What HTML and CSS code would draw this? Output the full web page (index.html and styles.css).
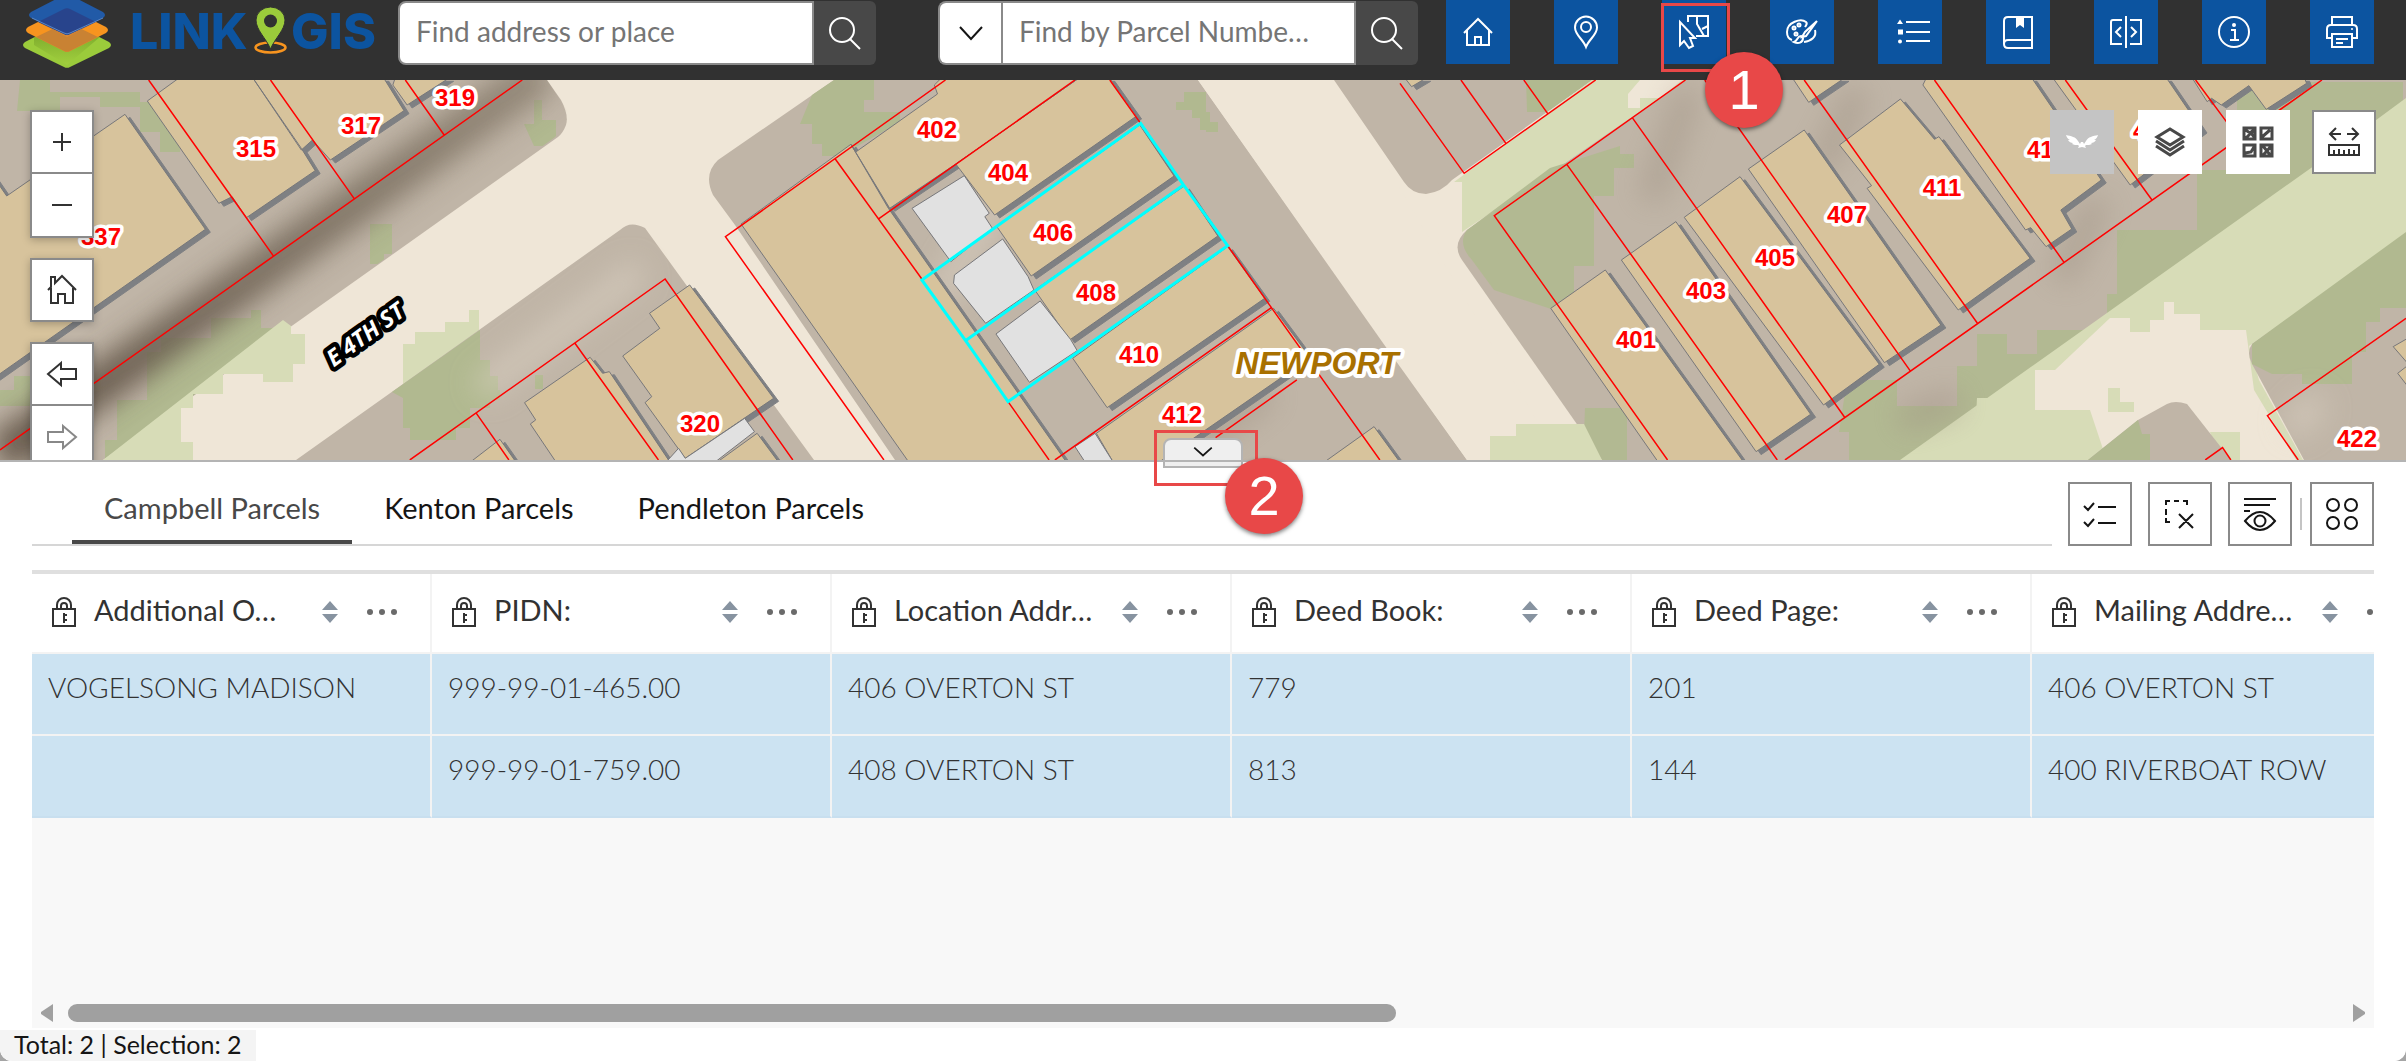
FILE: index.html
```html
<!DOCTYPE html>
<html lang="en">
<head>
<meta charset="utf-8">
<title>LINK GIS</title>
<link rel="stylesheet" href="styles.css">
</head>
<body>
<header class="topbar">
  <a class="logo" href="#" aria-label="LINK GIS">
    <svg width="384" height="72" viewBox="0 0 384 72">
      <defs>
        <linearGradient id="g1" x1="0" x2="0" y1="0" y2="1"><stop offset="0" stop-color="#4a7018"/><stop offset=".5" stop-color="#7ba82b"/><stop offset="1" stop-color="#a5d240"/></linearGradient>
        <linearGradient id="g2" x1="0" x2="0" y1="0" y2="1"><stop offset="0" stop-color="#a85a1c"/><stop offset="1" stop-color="#d98a38"/></linearGradient>
      </defs>
      <path d="M25 42 64 22a6 6 0 0 1 6 0l39 20q4 3 0 6L70 67a6 6 0 0 1-6 0L25 48q-4-3 0-6z" fill="#9bcb3b"/>
      <path d="M34 37 67 20l33 17 -33 28 -33-20z" fill="url(#g1)" opacity=".6"/>
      <path d="M28 27 64 9a6 6 0 0 1 6 0l36 18q4 3 0 6L70 51a6 6 0 0 1-6 0L28 33q-4-3 0-6z" fill="#f7941f"/>
      <path d="M36 37 67 22l31 15 -28 14a6 6 0 0 1-6 0z" fill="#c98233"/>
      <path d="M40 23 67 9l27 14 -27 14z" fill="url(#g2)"/>
      <path d="M31 12 64-5a6 6 0 0 1 6 0l33 17q4 3 0 6L70 34a6 6 0 0 1-6 0L31 18q-4-3 0-6z" fill="#215aa7"/>
      <path d="M38 22 64 9a6 6 0 0 1 6 0l26 13-26 12a6 6 0 0 1-6 0z" fill="#28448c"/>
      <path d="M32 18 64 33a6 6 0 0 0 6 0l33-15" fill="none" stroke="#5a86c4" stroke-width="1"/>
      <text x="130" y="49" class="logo-word">LINK</text>
      <ellipse cx="270.500" cy="47.500" rx="15" ry="5" fill="none" stroke="#f7941f" stroke-width="2.500"/>
      <path d="M270.500 49C266 38 256 30 256 20a14.500 13 0 0 1 29 0c0 10-10 18-14.500 29z" fill="#9bcb3b" stroke="#313131" stroke-width="1"/>
      <circle cx="270.500" cy="21" r="6.500" fill="#313131"/>
      <text x="291" y="49" class="logo-word">GIS</text>
    </svg>
  </a>
  <form class="search">
    <input class="search-input first" type="text" aria-label="Find address or place" placeholder="Find address or place">
    <button class="search-go" type="button" aria-label="Search address"><svg class="ic" viewBox="0 0 32 32"><circle cx="13" cy="13" r="12"/><path d="m21 22 10 10"/></svg></button>
  </form>
  <form class="search">
    <button class="search-source" type="button" aria-label="Search source"><svg class="ic" viewBox="0 0 32 32"><path d="m5 10 11 12 11-12"/></svg></button>
    <input class="search-input" type="text" aria-label="Find by Parcel Number" placeholder="Find by Parcel Numbe…">
    <button class="search-go" type="button" aria-label="Search parcels"><svg class="ic" viewBox="0 0 32 32"><circle cx="13" cy="13" r="12"/><path d="m21 22 10 10"/></svg></button>
  </form>
  <nav class="tools">
    <button class="tool" type="button" aria-label="Home"><svg class="ic" viewBox="0 0 32 32"><path d="M2 17 16 3l14 14M5 14v15h22V14M13 29v-8h6v8"/></svg></button>
    <button class="tool" type="button" aria-label="Locate"><svg class="ic" viewBox="0 0 32 32"><path d="M16 31C13 23 5 19 5 11.500a11 11 0 0 1 22 0C27 19 19 23 16 31z"/><circle cx="16" cy="11" r="5"/></svg></button>
    <button class="tool" type="button" aria-label="Select parcels"><svg class="ic" viewBox="0 0 32 32"><path d="M2 7v23l4-4 5 7 4-2-3-8h5zM10 7V1h20v20h-12M19 1v8l7 12M30 11l-6 3" transform="translate(0 -1)"/></svg></button>
    <button class="tool" type="button" aria-label="Draw"><svg class="ic" viewBox="0 0 32 32"><path d="M19 11c1-2 3-3 1-5C15 2 1 6 1 16c0 4 2 7 5 8M18 26c7-1 13-5 11-12M31 5 19 16l-3 5 4-1 11-15M15 20c-4 0-3 5-7 6 4 2 9 1 9-4z"/><circle cx="13" cy="9" r="1.500"/><circle cx="8" cy="12" r="1.500"/><circle cx="10" cy="18" r="1.500"/></svg></button>
    <button class="tool" type="button" aria-label="Legend"><svg class="ic wide" viewBox="0 0 44 32"><path d="M18 6h24M18 16h24M18 25h24"/><path class="solid" d="M12 3.500 15 8H9zM10 13.500h5v5h-5z"/><circle class="solid" cx="12" cy="25.500" r="2"/></svg></button>
    <button class="tool" type="button" aria-label="Bookmarks"><svg class="ic" viewBox="0 0 32 32"><path d="M30 1H6Q2 1 2 5v23q0 4 4 4h24V1zM30 24H6q-4 0-4 4"/><path class="solid" d="M14 2h8v10l-4-3-4 3z"/></svg></button>
    <button class="tool" type="button" aria-label="Swipe"><svg class="ic" viewBox="0 0 32 32"><path d="M16 0v32M12 4H3q-2 0-2 2v22h11M20 4h11v24H20M11 11l-5 5 5 5M21 11l5 5-5 5"/></svg></button>
    <button class="tool" type="button" aria-label="About"><svg class="ic" viewBox="0 0 32 32"><circle cx="16" cy="16" r="15"/><path d="M13 14h4v10M12 24h9"/><circle class="solid" cx="16" cy="9" r="2"/></svg></button>
    <button class="tool" type="button" aria-label="Print"><svg class="ic" viewBox="0 0 32 32"><path d="M6 8V1h20v7M6 22H1V13q0-4 4-4h22q4 0 4 4v9h-5M6 18h20v13H6zM10 23h12M10 27h7"/><circle class="solid" cx="26" cy="13" r="1"/></svg></button>
  </nav>
  <div class="callout-box one"></div>
  <div class="callout-dot one">1</div>
</header>

<main class="map">
  <svg class="map-canvas" viewBox="0 80 2406 380" preserveAspectRatio="xMidYMid slice">
    <defs>
      <filter id="soft" x="-20%" y="-20%" width="140%" height="140%"><feGaussianBlur stdDeviation="14"/></filter>
      <clipPath id="block-nw"><path d="M0 80H547l20 30-2 20L103 460H0z"/></clipPath>
      <linearGradient id="fade" x1="0" x2="1" y1="0" y2="0"><stop offset="0" stop-color="#5b4e41"/><stop offset="1" stop-color="#8f8474"/></linearGradient>
    </defs>
    <rect class="road" y="80" width="2406" height="380"/>

    <!-- city blocks and vegetation, western half -->
    <path class="land" d="M0 80H547l14 20q8 15 5 25-3 8-8 12L103 460H0z"/>
    <g clip-path="url(#block-nw)">
      <path class="veg" d="M20 80h30v12h90v10h40v50h-20v-20h-20v-25h-40v-10h-40v14H17zM0 390h14v-14h16v30H0zM105 440h12v-40h30v-48h14v-14h50v-20h40v-8h10v18h20v20h12v30l-60 45-80 56H105zM370 224h22v30h-8v10h-14zM524 124h10v-24h8v20h14v16l-8 10h-14z"/>
      <path d="M545 70 0 456" fill="none" stroke="url(#fade)" stroke-width="42" filter="url(#soft)" opacity=".9"/>
    </g>
    <path class="vegl" d="M103 460h90v-18h-12v-34h12v-14h30v-20h40v8h30v-18h12v-30h-14v-8l-8-6zM403 400v-56h12v-12h30v-10h24v-12h10v60z"/>
    <path class="land" d="M296 460 620 230q10-10 25-2l42 58 127 174z"/>
    <path class="veg" d="M392 392 480 330v30h10v30h10v10h-10v8H470v20h-14v12H410v-12h-7v-30zM535 375h8v14h-8zM490 376h8v14h-8z"/>
    <path class="land" d="M834 80 718 160q-15 14-5 35l22 30 160 235h572L1198 80z"/>
    <path class="veg" d="M812 95 834 80h40v20h-10v12h36v10l-60 34h-18v-12h-10v-20h-12zM1184 92h22v20h4v18h-10v-12h-8v-8h-16v-8h8zM1206 122h12v10h-12z"/>
    <path class="road" d="M1198 80h138L1560 460h-93l-84-117z"/>

    <!-- city blocks and vegetation, eastern half -->
    <path class="land" d="M1334 80h258l-140 100q-10 12-26 14-14 0-22-12z"/>
    <path class="veg" d="M1526 80h66l-45 32h-20z"/>
    <path class="vegl" d="M1592 80h96L1462 232v-50h-8z"/>
    <path class="road" d="M1640 80h42l-22 18h-20v10h-12V94z"/>
    <path class="land" d="M1686 80 1467 230q-16 14-5 30l140 200h315L2406 100V80z"/>
    <path class="veg" d="M1550 168 1467 230q-10 14 5 30l22 30 60 20 20-10v-34h20v-70h20v-28h20v-14h-14v-8zM1585 408h42v52h-25l-18-25zM1847 380h50v26h60v-40h20v-32h30v20h30v-24h70v-36h10v-64h80v-60h40v-88h166v24L1917 460h-68v-28h-10z" opacity=".95"/>
    <path class="vegl" d="M1516 420v16h-26v24h112l-18-36h-68z"/>
    <path class="vegl" d="M2406 98v138L2249 346l10 34 44 80H1900L2311 168z"/>
    <path class="road" d="M2110 318h20v14h20v-12h14v-18h10v12h26v16h46l8 60 48 80H2110l-20-60h-55v-40h20z"/>
    <path class="vegl" d="M1977 398h12v14h40v14h36v34h-80v-10h-38v-14h28zM2108 388h12v14h14v10h-26zM2210 432h30v28h-20z"/>
    <path class="land" d="M2138 420 2088 460h143l-44-56q-12-4-20 0z"/>
    <path class="veg" d="M2138 420 2088 460h62v-26h-8z"/>
    <path class="land" d="M2406 236 2252 344q-6 8 0 20l52 96h102z"/>
    <path class="veg" d="M2406 232 2252 344v20l20 10h30v10h50v-32h14v-30h14v-14h26z"/>
    <path d="M1690 90 1650 200M1860 90 1820 170M2100 200 2060 280M1960 400l-60 20M1270 390l-80 60" fill="none" stroke="#9d9081" stroke-width="26" filter="url(#soft)" opacity=".45"/>
    <path d="M640 270 480 390M1000 200l-60 100M2320 400l-30 30" fill="none" stroke="#dcd2c4" stroke-width="24" filter="url(#soft)" opacity=".6"/>

    <!-- building footprints -->
    <g class="buildings">
      <g transform="translate(0 80) scale(.4464 .3333)">
        <path d="M-20 280 15 348 280 103 460 448-20 900zM330 63 400-5H567L675 205 706 272 552 413 520 350 490 370zM567-5H860L905 92 740 240 700 180 675 210zM885-5 880 15 912 75 1005-5zM1545 615 1733 955 1535 1135 1445 968 1460 950 1395 828 1478 745 1455 700zM1322 832 1350 880 1365 875 1500 1145H1245L1188 1032 1200 1020 1175 968zM1055 1145 1120 1078 1155 1145z"/>
      </g>
      <g transform="translate(700 80) scale(.4464 .3333)">
        <path d="M92 432 338 193 422 385 820 1145H467zM338 193 350 215 532 42 525 15 540-5H848L573 252 425 385zM573 252 848-5H918L978 108 660 405zM985 135 1062 288 742 588 665 440zM1085 318 1160 468 828 780 750 630zM1182 500 1265 655 912 983 835 835zM1285 685 1367 833 1030 1145H925L888 1060zM1510 1040 1400 1145H1567zM128 1060 40 1145H175z"/>
      </g>
      <g transform="translate(1400 80) scale(.6416 .3333)">
        <path d="M320 570 235 685 402 1145H535zM430 425 345 540 555 1115 640 1003zM530 290 443 412 660 975 747 853zM630 150 543 267 755 848 843 735zM780 57 685 195 735 317 728 325 870 690 982 535 840 170 833 178zM820-5 815 15 975 450 983 443 1007 500 1047 447 1030 390 1093 300 985-5zM1018-5 1138 315 1250 150 1195-5zM1235-5 1258 65 1265 55 1280 75 1323 17 1350 88 1413 10 1410-5zM612-5 637 67 692-5zM8-5 18 20 40-5zM1575 770 1548 800 1575 860zM1575 850 1555 880 1575 930z"/>
      </g>
    </g>
    <g class="decks" transform="translate(700 80) scale(.4464 .3333)">
      <path d="M592 287 475 385 562 545 655 445 638 410 648 400zM678 477 570 585 568 610 640 730 748 630 735 590zM762 663 663 762 738 907 845 812 830 778zM885 1060 925 1145H862L840 1100zM100 1015 122 1055 35 1145H-75L-48 1105-33 1135z"/>
    </g>

    <!-- parcel lines -->
    <g class="parcels">
      <path transform="translate(0 80) scale(.4464 .3333)" d="M333 0 612 527M606 0 793 355M908 0 995 165M1170 0 0 1110M918 1140 1490 597 1776 1140M1288 790 1475 1140M1066 998 1140 1140"/>
      <path transform="translate(700 80) scale(.4464 .3333)" d="M550 0 57 470 412 1140M303 237 497 597M840 0 400 417M918 0 987 130M690 965 782 1140M1182 497 1280 683 1523 1140M1280 683 795 1140M1337 900 1155 1073"/>
      <path transform="translate(1400 80) scale(.6416 .3333)" d="M0 10 100 280 305 0M95 0 165 190M193 0 230 100M445 0 147 407 417 1140M260 253 588 1140M362 113 693 1012M475 0 795 872M630 0 900 730M833 0 1035 547M1037 0 1172 360M1240 0 1290 130M1437 0 600 1140M1568 715 1352 1007 1400 1140M1255 1140 1282 1103 1295 1140"/>
    </g>
    <path class="selected" transform="translate(700 80) scale(.4464 .3333)" d="M987 130 1083 315 595 782 497 600zM1083 315 1182 497 690 965 595 782z"/>

    <g class="labels">
      <text x="256" y="157">315</text><text x="361" y="134">317</text><text x="455" y="106">319</text><text x="101" y="245">337</text>
      <text x="700" y="432">320</text><text x="937" y="138">402</text><text x="1008" y="181">404</text><text x="1053" y="241">406</text>
      <text x="1096" y="301">408</text><text x="1139" y="363">410</text><text x="1182" y="423">412</text><text x="1636" y="348">401</text>
      <text x="1706" y="299">403</text><text x="1775" y="266">405</text><text x="1847" y="223">407</text><text x="1942" y="196">411</text>
      <text x="2047" y="158">413</text><text x="2153" y="139">415</text><text x="2357" y="447">422</text>
    </g>
    <text class="place" x="1317" y="374">NEWPORT</text>
    <text class="street" transform="translate(370 341) rotate(-36)">E 4TH ST</text>
  </svg>

  <div class="map-left">
    <div class="ctl-group">
      <button class="ctl" type="button" aria-label="Zoom in"><svg class="ic" viewBox="0 0 32 32"><path d="M16 7v18M7 16h18"/></svg></button>
      <button class="ctl" type="button" aria-label="Zoom out"><svg class="ic" viewBox="0 0 32 32"><path d="M6 16h20"/></svg></button>
    </div>
    <div class="ctl-group"><button class="ctl" type="button" aria-label="Default extent"><svg class="ic" viewBox="0 0 32 32"><path d="M2 16 5 13V3h4v6l7-7 14 14M5 14v15h7v-9h7v9h8V14"/></svg></button></div>
    <div class="ctl-group">
      <button class="ctl" type="button" aria-label="Previous extent"><svg class="ic" viewBox="0 0 32 32"><path d="M15 5 2 16l13 11v-6h15V11H15z"/></svg></button>
      <button class="ctl faded" type="button" aria-label="Next extent"><svg class="ic" viewBox="0 0 32 32"><path d="m17 5 13 11-13 11v-6H2V11h15z"/></svg></button>
    </div>
  </div>
  <div class="map-right">
    <button class="ctl off" type="button" aria-label="Eagle view"><svg class="ic" viewBox="0 0 32 32"><path class="solid" d="M0 9c5 1 10 2 12 6l2 3 1-2h2l1 2 2-3c2-4 7-5 12-6-1 3-2 4-4 5l2 0c-1 2-3 3-5 3l1 1c-2 1-4 1-6 1l-1 1 1 2-4-1-4 1 1-2-1-1c-2 0-4 0-6-1l1-1c-2 0-4-1-5-3h2c-2-1-3-2-4-5z"/></svg></button>
    <button class="ctl plain" type="button" aria-label="Layers"><svg class="ic bold" viewBox="0 0 32 32"><path d="M16 3 29 11 16 19 3 11zM2 15l14 9 14-9M2 20l14 9 14-9"/></svg></button>
    <button class="ctl plain" type="button" aria-label="Basemaps"><svg class="ic bold" viewBox="0 0 32 32"><path d="M2 2h11v11H2zM19 2h11v11H19zM2 19h11v11H2zM19 19h11v11H19zM2 3l6 4 5-4M4 12l5-5 4 5M20 11l8-7M3 27l6-1 3-5M21 20l4 5 4-5M21 29l4-4 4 5"/></svg></button>
    <button class="ctl last" type="button" aria-label="Measure"><svg class="ic" viewBox="0 0 32 32"><path d="M8 3 2 9l6 6M2 9h11M24 3l6 6-6 6M30 9H19M1 20h30v10H1zM6 30v-5M11 30v-6M16 30v-5M21 30v-6M26 30v-5" transform="translate(0 -1)"/></svg></button>
  </div>
</main>

<section class="panel">
  <button class="collapse" type="button" aria-label="Collapse table"><svg class="ic" viewBox="0 0 32 32"><path d="m6 11 10 9 10-9"/></svg></button>
  <div class="callout-box two"></div>
  <div class="callout-dot two">2</div>
  <div class="panel-head">
    <div class="tabs" role="tablist">
      <button class="tab active" type="button" role="tab">Campbell Parcels</button>
      <button class="tab" type="button" role="tab">Kenton Parcels</button>
      <button class="tab" type="button" role="tab">Pendleton Parcels</button>
    </div>
    <div class="actions">
      <button class="ctl" type="button" aria-label="Show selected"><svg class="ic" viewBox="0 0 32 32"><path d="m0 8 4 4 6-7M0 24l4 4 6-7M14 9h18M14 25h18"/></svg></button>
      <button class="ctl" type="button" aria-label="Clear selection"><svg class="ic" viewBox="0 0 32 32"><path d="M2 7V3h4M10 3h5M19 3h4v4M2 11v6M2 20v4h4M15 16l14 14M29 16 15 30"/></svg></button>
      <button class="ctl" type="button" aria-label="Show or hide columns"><svg class="ic" viewBox="0 0 32 32"><path d="M0 1h32M0 7h26M0 13h6M1 23q15-18 30 0-15 18-30 0z"/><circle cx="16" cy="23" r="5.500"/></svg></button>
      <span class="rule"></span>
      <button class="ctl" type="button" aria-label="Actions"><svg class="ic" viewBox="0 0 32 32"><circle cx="7" cy="7" r="6"/><circle cx="25" cy="7" r="6"/><circle cx="7" cy="25" r="6"/><circle cx="25" cy="25" r="6"/></svg></button>
    </div>
  </div>
  <svg width="0" height="0" class="defs">
    <symbol id="lock" viewBox="0 0 24 32"><path d="M1 13h22v17H1zM5 13V9a7 7 0 0 1 14 0v4M9 13v-3a3 3 0 0 1 6 0v3" fill="none" stroke="#323232" stroke-width="2"/><path d="M11 17h2v10h-2zM13 18h2v2h-2zM13 23h2v2h-2z" fill="#323232"/></symbol>
    <symbol id="sort" viewBox="0 0 16 22"><path d="M8 0l8 9H0zM8 22l8-9H0z" fill="#8793a0"/></symbol>
    <symbol id="more" viewBox="0 0 32 8"><circle cx="4" cy="4" r="3" fill="#6a6a6a"/><circle cx="16" cy="4" r="3" fill="#6a6a6a"/><circle cx="28" cy="4" r="3" fill="#6a6a6a"/></symbol>
  </svg>
  <div class="grid">
    <table class="data">
      <thead>
        <tr>
          <th scope="col"><div class="th"><svg class="lock"><use href="#lock"/></svg><span>Additional O…</span><svg class="sort"><use href="#sort"/></svg><svg class="more"><use href="#more"/></svg></div></th>
          <th scope="col"><div class="th"><svg class="lock"><use href="#lock"/></svg><span>PIDN:</span><svg class="sort"><use href="#sort"/></svg><svg class="more"><use href="#more"/></svg></div></th>
          <th scope="col"><div class="th"><svg class="lock"><use href="#lock"/></svg><span>Location Addr…</span><svg class="sort"><use href="#sort"/></svg><svg class="more"><use href="#more"/></svg></div></th>
          <th scope="col"><div class="th"><svg class="lock"><use href="#lock"/></svg><span>Deed Book:</span><svg class="sort"><use href="#sort"/></svg><svg class="more"><use href="#more"/></svg></div></th>
          <th scope="col"><div class="th"><svg class="lock"><use href="#lock"/></svg><span>Deed Page:</span><svg class="sort"><use href="#sort"/></svg><svg class="more"><use href="#more"/></svg></div></th>
          <th scope="col"><div class="th"><svg class="lock"><use href="#lock"/></svg><span>Mailing Addre…</span><svg class="sort"><use href="#sort"/></svg><svg class="more"><use href="#more"/></svg></div></th>
        </tr>
      </thead>
      <tbody>
        <tr><td>VOGELSONG MADISON</td><td>999-99-01-465.00</td><td>406 OVERTON ST</td><td>779</td><td>201</td><td>406 OVERTON ST</td></tr>
        <tr><td></td><td>999-99-01-759.00</td><td>408 OVERTON ST</td><td>813</td><td>144</td><td>400 RIVERBOAT ROW</td></tr>
      </tbody>
    </table>
    <div class="scrollbar">
      <svg width="14" height="18" viewBox="0 0 14 18"><path d="M13 0v18L1 10V8z" fill="#a0a0a0"/></svg>
      <div class="track"><div class="thumb"></div></div>
      <svg width="14" height="18" viewBox="0 0 14 18"><path d="M1 0v18l12-8V8z" fill="#a0a0a0"/></svg>
    </div>
  </div>
  <footer class="status">Total: 2 | Selection: 2</footer>
</section>
</body>
</html>
```
FILE: styles.css
```css
* { box-sizing: border-box; }
html { background: #a5a5a5; }
body {
  margin: 0;
  height: 100vh;
  display: flex;
  flex-direction: column;
  overflow: hidden;
  background: #fff;
  border-radius: 0 0 12px 12px;
  font-family: Lato, "Noto Sans", sans-serif;
  font-size: 28px;
  color: #323232;
}
button, input { font: inherit; color: inherit; margin: 0; padding: 0; border: 0; background: none; }
button { display: flex; align-items: center; justify-content: center; flex: none; }
.ic { width: 32px; height: 32px; fill: none; stroke: currentColor; stroke-width: 2; overflow: visible; }
.ic.wide { width: 44px; }
.ic.bold { stroke-width: 3; }
.solid { fill: currentColor; stroke: none; }
.defs { position: absolute; }

/* Top bar */
.topbar { position: relative; z-index: 3; flex: none; height: 80px; display: flex; align-items: flex-start; background: #313131; }
.logo { flex: none; width: 398px; height: 72px; }
.logo svg { display: block; }
.logo-word { font: 800 50px Inter, sans-serif; fill: #0c54a0; }
.search { flex: none; display: flex; height: 64px; margin-top: 1px; color: #fff; }
.search + .search { margin-left: 62px; }
.search-input { width: 355px; padding: 0 16px 4px; background: #fff; border: 2px solid #8a8a8a; color: #323232; }
.search-input.first { width: 416px; border-radius: 8px 0 0 8px; }
.search-input::placeholder { color: #757575; opacity: 1; }
.search-source { width: 63px; background: #fff; border: 2px solid #8a8a8a; border-right: 0; border-radius: 8px 0 0 8px; color: #151515; }
.search-go { width: 62px; background: #484848; border-radius: 0 6px 6px 0; }
.tools { display: flex; gap: 44px; margin-left: auto; padding-right: 32px; }
.tool { width: 64px; height: 64px; background: #0c54a0; color: #fff; }

/* Numbered callouts */
.callout-box { position: absolute; z-index: 4; border: 3px solid #e84848; pointer-events: none; }
.callout-dot {
  position: absolute; z-index: 5; width: 78px; height: 76px; border-radius: 50%;
  background: #e84848; color: #fff; box-shadow: 0 2px 4px rgba(0, 0, 0, .5);
  font: 56px/76px "Liberation Sans", sans-serif; text-align: center;
}
.callout-box.one { right: 676px; top: 3px; width: 69px; height: 69px; }
.callout-dot.one { right: 623px; top: 52px; }
.callout-box.two { left: calc(50% - 49px); top: -32px; width: 104px; height: 56px; }
.callout-dot.two { left: calc(50% + 22px); top: -4px; }

/* Map */
.map { position: relative; flex: none; height: 380px; overflow: hidden; color: #323232; }
.map-canvas { display: block; width: 100%; height: 100%; }
.road { fill: #efe6d7; }
.land { fill: #c0b5a7; }
.veg { fill: #b1b990; }
.vegl { fill: #d7dcb7; }
.buildings { filter: drop-shadow(5px 3px 0 #7e8083); }
.buildings path { fill: #d7c39c; stroke: #77777a; stroke-width: 1; vector-effect: non-scaling-stroke; }
.decks path { fill: #e1e1e1; stroke: #77777a; stroke-width: 1; vector-effect: non-scaling-stroke; }
.parcels path, .selected { fill: none; stroke: #f00; stroke-width: 1.5; vector-effect: non-scaling-stroke; }
.selected { stroke: #0ff; stroke-width: 3; }
.labels text, .place, .street { text-anchor: middle; paint-order: stroke; stroke-linejoin: round; }
.labels text { font: bold 24px "Liberation Sans", sans-serif; fill: #f00; stroke: #fff; stroke-width: 7; }
.place { font: italic bold 32px "Liberation Sans", sans-serif; fill: #a87000; stroke: #fff; stroke-width: 8; }
.street { font: italic bold 23px "Open Sans", sans-serif; fill: #fff; stroke: #000; stroke-width: 9; }
.map-left { position: absolute; left: 30px; top: 30px; display: flex; flex-direction: column; gap: 20px; }
.ctl-group { display: flex; flex-direction: column; box-shadow: 0 2px 8px rgba(0, 0, 0, .25); }
.ctl-group .ctl + .ctl { border-top-width: 0; }
.map-right { position: absolute; right: 30px; top: 30px; display: flex; gap: 24px; }
.ctl { width: 64px; height: 64px; background: #fff; border: 2px solid #8a8a8a; }
.ctl.plain { border-color: #fff; color: #484848; }
.ctl.off { border-color: #c4c4c4; background: #c4c4c4; color: #fff; }
.ctl.last { margin-left: -2px; }
.ctl.faded { color: #888; }

/* Attribute table */
.panel { position: relative; z-index: 2; flex: 1; min-height: 0; display: flex; flex-direction: column; border-top: 2px solid #b4b4b4; background: #fff; border-radius: 0 0 12px 12px; }
.collapse { position: absolute; left: calc(50% - 40px); top: -24px; width: 80px; height: 30px; padding-bottom: 2px; background: linear-gradient(#efefef 20px, #b4b4b4 20px, #b4b4b4 22px, #efefef 22px); border: 2px solid #b4b4b4; border-radius: 8px 8px 0 0; color: #151515; }
.collapse .ic { width: 28px; height: 28px; }
.panel-head { display: flex; gap: 16px; margin: 20px 32px 24px; color: #151515; }
.tabs { flex: 1; display: flex; padding-left: 40px; border-bottom: 2px solid #d6d6d6; font-size: 29px; }
.tab { padding: 0 32px 8px; border-bottom: 4px solid transparent; }
.tab.active { border-color: #484848; color: #484848; }
.actions { display: flex; align-items: center; gap: 16px; }
.rule { width: 2px; height: 32px; margin: 0 -8px; background: #c4c4c4; }
.grid { flex: 1; min-height: 0; display: flex; flex-direction: column; margin: 0 32px; overflow: hidden; border-top: 4px solid #dfdfdf; background: #f8f8f8; }
.data { width: 2400px; table-layout: fixed; border-collapse: separate; border-spacing: 0; text-align: left; }
.data th { height: 80px; padding: 0 32px 2px 20px; background: #fff; border-right: 2px solid #f3f3f3; border-bottom: 2px solid #f3f3f3; font-size: 29px; font-weight: 400; }
.th { display: flex; align-items: center; }
.th span { flex: 1; margin-left: 18px; padding-bottom: 6px; white-space: nowrap; }
.lock { width: 24px; height: 32px; }
.sort { width: 16px; height: 22px; margin-right: 28px; }
.more { width: 32px; height: 8px; }
.data td { height: 82px; padding: 0 16px 14px; background: #cce3f2; border-right: 2px solid #f3f3f3; border-bottom: 2px solid #f3f3f3; font-weight: 300; white-space: nowrap; }
.data tr:last-child td { border-bottom-color: #c8dfef; }
.scrollbar { display: flex; gap: 14px; margin-top: auto; padding: 0 8px 6px; }
.track { flex: 1; }
.thumb { width: 58.5%; height: 18px; border-radius: 9px; background: #a0a0a0; }
.status { align-self: flex-start; margin-top: 2px; padding: 0 14px 3px; background: #f4f4f4; border-radius: 0 0 0 12px; color: #151515; font-size: 25px; line-height: 28px; }
```
